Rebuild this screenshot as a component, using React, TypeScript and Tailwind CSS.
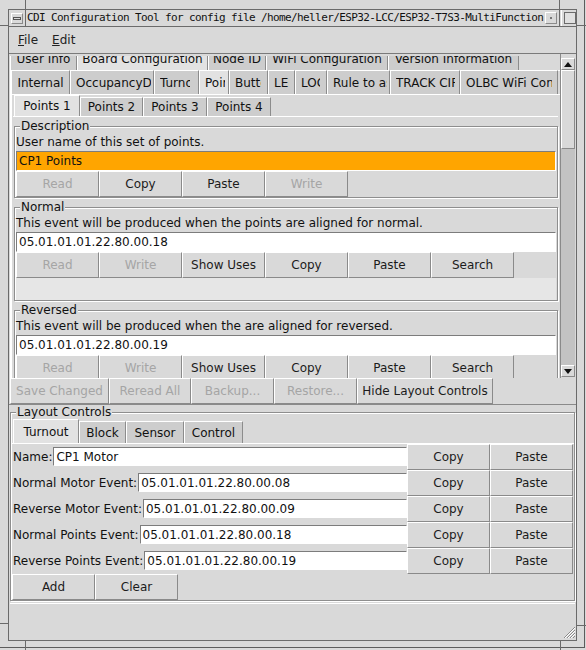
import React from "react"
import clsx from "clsx"

const cn = (...a: (string | false | undefined)[]) => clsx(a)

// swing-ish raised button
function Btn({
  children,
  w = "w-[83px]",
  h = "h-[26px]",
  disabled,
}: {
  children: React.ReactNode
  w?: string
  h?: string
  disabled?: boolean
}) {
  return (
    <div
      className={cn(
        "flex shrink-0 items-center justify-center border border-t-white border-l-white border-r-[#8a8a8a] border-b-[#8a8a8a] bg-[#d9d9d9] whitespace-nowrap",
        disabled ? "text-[#a5a5a5]" : "text-[#1c1c1c]",
        w,
        h
      )}
    >
      {children}
    </div>
  )
}

function Tab({
  label,
  w,
  sel,
  clipW,
  h = "h-[24px]",
}: {
  label: string
  w: string
  sel?: boolean
  clipW?: string
  h?: string
}) {
  return (
    <div
      className={cn(
        "flex shrink-0 items-center overflow-hidden whitespace-nowrap border-t border-l border-r border-t-white border-l-white border-r-[#8c8c8c]",
        clipW ? "justify-start pl-[5px]" : "justify-center",
        sel ? "bg-[#e2e2e2]" : "bg-[#cdcdcd]",
        w,
        h
      )}
    >
      {clipW ? <div className={cn("overflow-hidden", clipW)}>{label}</div> : label}
    </div>
  )
}

function Field({ value, className }: { value: string; className?: string }) {
  return (
    <div
      className={cn(
        "flex items-center overflow-hidden whitespace-nowrap border border-t-[#7c7c7c] border-l-[#7c7c7c] border-r-white border-b-white pl-[2px]",
        className
      )}
    >
      {value}
    </div>
  )
}

function Box({
  title,
  children,
  className,
}: {
  title: string
  children: React.ReactNode
  className?: string
}) {
  return (
    <fieldset
      className={cn(
        "flex flex-col border border-[#8e8e8e] shadow-[inset_1px_1px_0_#ffffff,1px_1px_0_#ffffff]",
        className
      )}
    >
      <legend className="ml-[5px] h-[14px] bg-[#d9d9d9] px-[1px] leading-[14px]">{title}</legend>
      {children}
    </fieldset>
  )
}

function EventBox({ title, text, value, extra }: { title: string; text: string; value: string; extra?: boolean }) {
  return (
    <Box title={title} className="mt-[2px]">
      <div className="flex h-[18px] items-center pl-[1px]">{text}</div>
      <Field value={value} className="h-[20px] mx-[1px] bg-white" />
      <div className="flex pl-[1px]">
        <Btn disabled>Read</Btn>
        <Btn disabled>Write</Btn>
        <Btn>Show Uses</Btn>
        <Btn>Copy</Btn>
        <Btn>Paste</Btn>
        <Btn>Search</Btn>
      </div>
      {extra && <div className="mx-[1px] h-[22px] bg-[#e6e6e6]" />}
    </Box>
  )
}

function LayoutRow({ label, value }: { label: string; value: string }) {
  return (
    <div className="flex h-[26px] items-start">
      <div className="flex h-[26px] shrink-0 items-center pl-[1px] pr-[1px]">{label}</div>
      <Field value={value} className="mt-[3px] h-[19px] flex-1 bg-white" />
      <Btn>Copy</Btn>
      <Btn>Paste</Btn>
    </div>
  )
}

export default function App() {
  return (
    <div className="relative h-[650px] w-[586px] overflow-hidden bg-[#d9d9d9] font-['DejaVu_Sans',sans-serif] text-[12px] text-[#111]">
      {/* wm frame corner marks */}
      <div className="absolute left-[25px] top-0 h-[9px] w-px bg-[#6a6a6a]" />
      <div className="absolute left-0 top-[25px] h-px w-[8px] bg-[#6a6a6a]" />
      <div className="absolute left-[559px] top-0 h-[9px] w-px bg-[#6a6a6a]" />
      <div className="absolute right-0 top-[25px] h-px w-[9px] bg-[#6a6a6a]" />
      <div className="absolute left-0 top-[623px] h-px w-[8px] bg-[#6a6a6a]" />
      <div className="absolute left-[25px] top-[641px] h-[9px] w-px bg-[#6a6a6a]" />
      <div className="absolute left-[560px] top-[641px] h-[9px] w-px bg-[#6a6a6a]" />
      <div className="absolute right-0 top-[625px] h-px w-[9px] bg-[#6a6a6a]" />

      <div className="h-[648px] w-[585px] border-r border-b border-[#5c5c5c] pl-[8px] pt-[9px]">
        <div className="flex h-[632px] w-[569px] flex-col border border-[#6b6b6b]">
          {/* title bar */}
          <div className="flex h-[17px] shrink-0 items-center border-b border-[#6b6b6b]">
            <div className="flex h-full w-[17px] items-center justify-center border-r border-[#6b6b6b]">
              <div className="flex h-[11px] w-[12px] items-center justify-center border border-t-white border-l-white border-r-[#8a8a8a] border-b-[#8a8a8a]">
                <div className="h-[3px] w-[8px] border border-[#555]" />
              </div>
            </div>
            <div className="w-[519px] overflow-hidden whitespace-nowrap pl-[1px] font-['DejaVu_Sans_Mono',monospace] text-[11px] leading-[16px] tracking-[-0.62px] text-[#111]">
              CDI Configuration Tool for config file /home/heller/ESP32-LCC/ESP32-T7S3-MultiFunction
            </div>
            <div className="flex h-[12px] w-[12px] items-center justify-center border border-t-white border-l-white border-r-[#8a8a8a] border-b-[#8a8a8a]">
              <div className="h-[2px] w-[2px] bg-[#777]" />
            </div>
            <div className="ml-[2px] h-full w-[3px] border-l border-r border-l-[#6b6b6b] border-r-white" />
            <div className="ml-[2px] h-[12px] w-[12px] border border-[#6b6b6b] bg-[#e0e0e0]" />
          </div>

          {/* menu bar */}
          <div className="flex h-[27px] shrink-0 items-center gap-[14px] border-b border-[#7a7a7a] pl-[9px] text-[#222]">
            <span>
              <span className="underline">F</span>ile
            </span>
            <span>
              <span className="underline">E</span>dit
            </span>
          </div>

          {/* scroll pane */}
          <div className="flex h-[324px] shrink-0 pl-px">
            <div className="mt-[2px] h-[322px] w-[550px] overflow-hidden">
              <div className="mt-[-10px] flex flex-col">
                {/* row 1 tabs (scrolled) */}
                <div className="flex h-[24px] items-end">
                  <Tab label="User Info" w="w-[67px]" />
                  <Tab label="Board Configuration" w="w-[131px]" sel />
                  <Tab label="Node ID" w="w-[58px]" />
                  <Tab label="WiFi Configuration" w="w-[122px]" />
                  <Tab label="Version Information" w="w-[131px]" />
                </div>
                <div className="flex flex-col border-l border-white">
                  <div className="flex h-[24px] items-end border-t border-white">
                    <Tab label="Internal" w="w-[59px]" />
                    <Tab label="OccupancyDetectors" w="w-[84px]" clipW="w-[75px]" />
                    <Tab label="Turnouts" w="w-[45px]" clipW="w-[30px]" />
                    <Tab label="Points" w="w-[30px]" clipW="w-[20px]" sel />
                    <Tab label="Buttons" w="w-[39px]" clipW="w-[26px]" />
                    <Tab label="LEDs" w="w-[27px]" clipW="w-[15px]" />
                    <Tab label="LOGIC" w="w-[32px]" clipW="w-[19px]" />
                    <Tab label="Rule to aspect" w="w-[63px]" clipW="w-[54px]" />
                    <Tab label="TRACK CIRCUITS" w="w-[70px]" clipW="w-[59px]" />
                    <Tab label="OLBC WiFi Connection" w="w-[98px]" clipW="w-[86px]" />
                  </div>
                  <div className="flex flex-col border-l border-t border-white pl-[1px]">
                    <div className="flex h-[21px] items-end pl-px">
                      <Tab label="Points 1" w="w-[66px]" h="h-[21px]" sel />
                      <Tab label="Points 2" w="w-[63px]" h="h-[19px]" />
                      <Tab label="Points 3" w="w-[64px]" h="h-[19px]" />
                      <Tab label="Points 4" w="w-[64px]" h="h-[19px]" />
                    </div>
                    <div className="flex w-[545px] flex-col border-t border-white pt-[2px] pl-[1px]">
                      <Box title="Description">
                        <div className="flex h-[18px] items-center pl-[1px]">User name of this set of points.</div>
                        <Field value="CP1 Points" className="mx-[1px] h-[20px] bg-[#ffa500] border-r-[#ffe08a] border-b-[#ffe08a]" />
                        <div className="flex pl-[1px]">
                          <Btn disabled>Read</Btn>
                          <Btn>Copy</Btn>
                          <Btn>Paste</Btn>
                          <Btn disabled>Write</Btn>
                        </div>
                      </Box>
                      <EventBox
                        title="Normal"
                        text="This event will be produced when the points are aligned for normal."
                        value="05.01.01.01.22.80.00.18"
                        extra
                      />
                      <EventBox
                        title="Reversed"
                        text="This event will be produced when the are aligned for reversed."
                        value="05.01.01.01.22.80.00.19"
                      />
                    </div>
                  </div>
                </div>
              </div>
            </div>
            {/* scrollbar */}
            <div className="flex h-full w-[15px] flex-col border-l border-[#8a8a8a] pt-[4px]">
              <div className="flex h-[12px] items-center justify-center border border-t-white border-l-white border-r-[#8a8a8a] border-b-[#8a8a8a]">
                <svg width="8" height="5" viewBox="0 0 8 5">
                  <path d="M0 5 L4 0 L8 5 Z" fill="#111" />
                </svg>
              </div>
              <div className="flex flex-1 flex-col bg-[#c3c3c3]">
                <div className="h-[79px] border border-t-white border-l-white border-r-[#8a8a8a] border-b-[#8a8a8a] bg-[#d9d9d9]" />
              </div>
              <div className="mb-px flex h-[12px] items-center justify-center border border-t-white border-l-white border-r-[#8a8a8a] border-b-[#8a8a8a]">
                <svg width="8" height="5" viewBox="0 0 8 5">
                  <path d="M0 0 L4 5 L8 0 Z" fill="#111" />
                </svg>
              </div>
            </div>
          </div>

          {/* bottom button row */}
          <div className="flex h-[26px] shrink-0 pl-px">
            <Btn w="w-[99px]" disabled>Save Changed</Btn>
            <Btn w="w-[82px]" disabled>Reread All</Btn>
            <Btn disabled>Backup...</Btn>
            <Btn disabled>Restore...</Btn>
            <Btn w="w-[136px]">Hide Layout Controls</Btn>
          </div>

          {/* layout controls */}
          <div className="flex flex-col border-t border-[#8a8a8a] pl-px pr-px">
            <Box title="Layout Controls">
              <div className="flex h-[24px] items-end pl-[2px]">
                <Tab label="Turnout" w="w-[66px]" h="h-[24px]" sel />
                <Tab label="Block" w="w-[47px]" h="h-[22px]" />
                <Tab label="Sensor" w="w-[58px]" h="h-[22px]" />
                <Tab label="Control" w="w-[59px]" h="h-[22px]" />
              </div>
              <div className="flex flex-col border-t border-white pl-px pr-px">
                <LayoutRow label="Name:" value="CP1 Motor" />
                <LayoutRow label="Normal Motor Event:" value="05.01.01.01.22.80.00.08" />
                <LayoutRow label="Reverse Motor Event:" value="05.01.01.01.22.80.00.09" />
                <LayoutRow label="Normal Points Event:" value="05.01.01.01.22.80.00.18" />
                <LayoutRow label="Reverse Points Event:" value="05.01.01.01.22.80.00.19" />
                <div className="flex">
                  <Btn>Add</Btn>
                  <Btn>Clear</Btn>
                </div>
              </div>
            </Box>
            <div className="mt-[2px] h-[40px] border-t border-white" />
          </div>
        </div>
      </div>

      {/* resize grip */}
      <svg className="absolute left-[563px] top-[626px]" width="12" height="12" viewBox="0 0 12 12">
        <path d="M12 1 L1 12 M12 4 L4 12 M12 7 L7 12 M12 10 L10 12" stroke="#8a8a8a" strokeWidth="1" />
        <path d="M12 2 L2 12 M12 5 L5 12 M12 8 L8 12" stroke="#ffffff" strokeWidth="1" />
      </svg>
    </div>
  )
}
